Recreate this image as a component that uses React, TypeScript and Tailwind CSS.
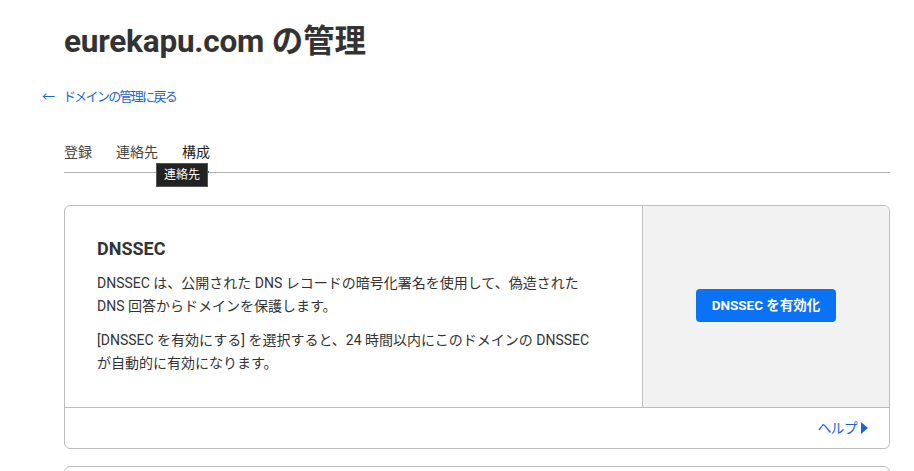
import React from "react";

export default function App() {
  const font = { fontFamily: "Roboto, 'Noto Sans CJK JP', sans-serif" };
  return (
    <div className="w-[914px] h-[471px] overflow-hidden bg-white text-[#333]" style={font}>
      <div className="pl-[64px] pr-[24px]">
        <h1 className="pt-[22px] text-[31.5px] leading-[40px] font-bold text-[#333] tracking-[-0.2px]">
          eurekapu.com の管理
        </h1>
        <a className="-ml-[22px] mt-[25px] flex items-center gap-[8px] text-[13px] leading-[20px] text-[#1b66c9]">
          <span className="text-[13px]">←</span>
          <span className="tracking-[-1.7px]">ドメインの管理に戻る</span>
        </a>
        <div className="relative mt-[35px] flex h-[31px] items-start border-b border-[#b0b0b0] text-[14px] leading-[20px] text-[#444]">
          <span className="mr-[24px]">登録</span>
          <span className="mr-[24px]">連絡先</span>
          <span className="text-[#222]">構成</span>
          <div className="absolute left-[92px] top-[21px] bg-[#222] px-[7px] py-[3px] text-[12px] leading-[16px] text-white border border-[#555]">
            連絡先
          </div>
          <div className="absolute left-[143px] top-[29px] h-[2px] w-[2px] bg-[#1b66c9]" />
        </div>
        <div className="mt-[32px] overflow-hidden rounded-[6px] border border-[#bdbdbd]">
          <div className="flex h-[201px]">
            <div className="w-[578px] border-r border-[#bdbdbd] pl-[32px] pr-[24px] pt-[31px]">
              <h2 className="text-[18px] leading-[24px] font-bold text-[#333]">DNSSEC</h2>
              <p className="mt-[11px] text-[14px] leading-[23px] text-[#333]">
                DNSSEC は、公開された DNS レコードの暗号化署名を使用して、偽造された
                <br />
                DNS 回答からドメインを保護します。
              </p>
              <p className="mt-[11px] text-[14px] leading-[23px] text-[#333]">
                [DNSSEC を有効にする] を選択すると、24 時間以内にこのドメインの DNSSEC
                <br />
                が自動的に有効になります。
              </p>
            </div>
            <div className="flex flex-1 items-center justify-center bg-[#f2f2f2]">
              <button className="mt-[-2px] h-[33px] w-[140px] rounded-[4px] bg-[#0a72f5] text-[13.5px] font-bold text-white">
                DNSSEC を有効化
              </button>
            </div>
          </div>
          <div className="flex h-[41px] items-center justify-end border-t border-[#bdbdbd] pr-[20px] text-[14px] text-[#1b66c9]">
            <span className="tracking-[-0.8px]">ヘルプ</span>
            <svg width="9" height="12" viewBox="0 0 9 12" className="ml-[3px]">
              <path d="M1 0 L8 6 L1 12 Z" fill="#1b66c9" />
            </svg>
          </div>
        </div>
        <div className="mt-[17px] h-[40px] rounded-t-[6px] border border-[#bdbdbd]" />
      </div>
    </div>
  );
}
